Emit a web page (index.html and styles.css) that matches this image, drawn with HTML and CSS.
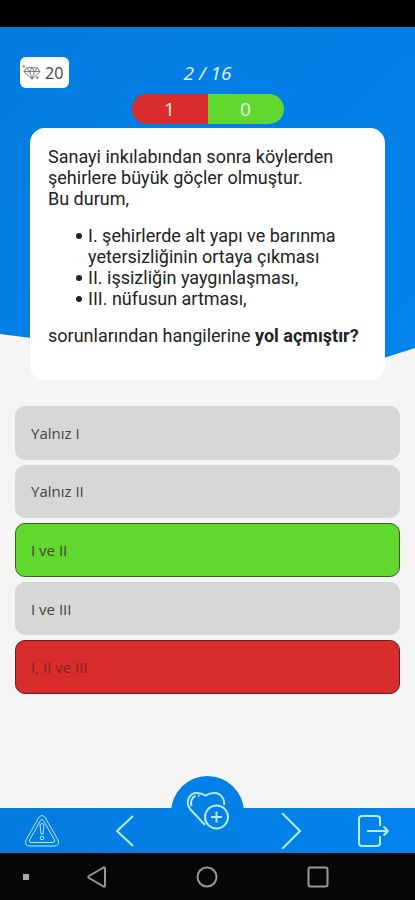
FILE: index.html
```html
<!DOCTYPE html>
<html lang="tr">
<head>
<meta charset="utf-8">
<meta name="viewport" content="width=device-width, initial-scale=1">
<title>Soru 2 / 16</title>
<link rel="stylesheet" href="styles.css">
</head>
<body>
<div class="status-bar"></div>
<main class="quiz">
  <header class="top">
    <div class="gems">
      <svg class="gem" viewBox="0 0 20 20" aria-hidden="true"><path d="M5 5h11l3 4-8.500 8L2 9zM2 9h17M5 5l3 4 2.500-4L13 9l3-4M8 9l2.500 8L13 9M2 2v3M.5 3.500h3M16 14v3M14.500 15.500h3"/></svg>
      <span>20</span>
    </div>
    <p class="progress">2 / 16</p>
  </header>
  <div class="score">
    <span class="wrong">1</span>
    <span class="right">0</span>
  </div>
  <section class="question">
    <p>Sanayi inkılabından sonra köylerden şehirlere büyük göçler olmuştur.<br>Bu durum,</p>
    <ul>
      <li>I. şehirlerde alt yapı ve barınma yetersizliğinin ortaya çıkması</li>
      <li>II. işsizliğin yaygınlaşması,</li>
      <li>III. nüfusun artması,</li>
    </ul>
    <p>sorunlarından hangilerine <b>yol açmıştır?</b></p>
  </section>
  <div class="answers">
    <button class="answer" type="button">Yalnız I</button>
    <button class="answer" type="button">Yalnız II</button>
    <button class="answer is-correct" type="button">I ve II</button>
    <button class="answer" type="button">I ve III</button>
    <button class="answer is-wrong" type="button">I, II ve III</button>
  </div>
</main>
<nav class="toolbar">
  <button class="tool" type="button" aria-label="Hata bildir">
    <svg class="warning" width="36" height="34" viewBox="0 0 36 34"><path d="M14.500 4Q18-1 21.500 4L34 26Q36 32 30 32H6Q0 32 2 26z"/><path d="M16.500 6.500Q18 4 19.500 6.500L30.500 26Q31 28.500 29 28.500H7Q5 28.500 5.500 26z"/><path d="M16 10.500Q18 8.500 20 10.500L19 20H17z"/><circle cx="18" cy="24" r="1.800"/></svg>
  </button>
  <button class="tool" type="button" aria-label="Önceki">
    <svg width="36" height="34" viewBox="0 0 36 34"><path d="M26 2L10 17l16 15"/></svg>
  </button>
  <button class="favorite" type="button" aria-label="Favorilere ekle">
    <svg width="44" height="40" viewBox="0 0 44 40"><path d="M19 34L4 18C-1 11 3 2 11 2c4 0 6 1 8.500 2.500C22 3 25 2 28 2c7 0 11 6 10 12"/><path d="M5.500 15C4 10.500 6 6.500 9.500 5M12 4.500h1.500"/><circle cx="30.500" cy="26" r="11.500"/><path d="M30.500 20.500v11M25 26h11"/></svg>
  </button>
  <button class="tool" type="button" aria-label="Sonraki">
    <svg width="36" height="36" viewBox="0 0 36 36"><path d="M9 0l18 18L9 36"/></svg>
  </button>
  <button class="tool" type="button" aria-label="Çıkış">
    <svg width="36" height="34" viewBox="0 0 36 34"><path d="M24 12V5q0-3-3-3H6Q3 2 3 5v24q0 3 3 3h15q3 0 3-3v-7M11 17h21M27.500 12.500L32 17l-4.500 4.500"/></svg>
  </button>
</nav>
<footer class="system-nav">
  <i class="dot"></i>
  <svg width="24" height="24" viewBox="0 0 24 24"><path d="M20 3.500v17q0 1.500-1.500 1L4 13q-1.500-1 0-2l14.500-8.500q1.500-.5 1.500 1z"/></svg>
  <svg width="24" height="24" viewBox="0 0 24 24"><circle cx="12" cy="12" r="9.500"/></svg>
  <svg width="24" height="24" viewBox="0 0 24 24"><rect x="2.500" y="2.500" width="19" height="19" rx="2"/></svg>
</footer>
</body>
</html>
```
FILE: styles.css
```css
* { box-sizing: border-box; }

body {
  margin: 0;
  min-height: 100vh;
  display: flex;
  flex-direction: column;
  background: #f5f5f5;
  font-family: "Open Sans", sans-serif;
  color: #444;
}

p, ul { margin: 0; }

button {
  margin: 0;
  padding: 0;
  border: 0;
  background: none;
  font: inherit;
  color: inherit;
}

svg {
  display: block;
  fill: none;
  stroke-linejoin: round;
}

.status-bar { height: 27px; background: #000; }

.quiz {
  position: relative;
  z-index: 0;
  flex: 1;
  padding-top: 30px;
}

.quiz::before {
  content: "";
  position: absolute;
  z-index: -1;
  inset: 0 0 auto;
  height: 349px;
  background: linear-gradient(135deg, #037bdf, #0284ee);
  clip-path: polygon(0 0, 100% 0, 100% 92%, 79% 100%, 0 88%);
}

.top {
  display: grid;
  grid-template-columns: 1fr auto 1fr;
  align-items: center;
  padding: 0 20px;
}

.gems {
  justify-self: start;
  display: flex;
  align-items: center;
  gap: 4px;
  height: 31px;
  padding: 0 6px 0 2px;
  border-radius: 6px;
  background: #fff;
  font-size: 16px;
}

.gem { width: 19px; height: 19px; stroke: #777; }

.progress {
  color: #e8f4ff;
  font-size: 19px;
  font-style: italic;
  font-weight: 500;
}

.score {
  display: grid;
  grid-template-columns: 1fr 1fr;
  width: 152px;
  margin: 6px auto 4px;
  border-radius: 15px;
  overflow: hidden;
  color: #f2f2e8;
  font-size: 19px;
  font-weight: 500;
  line-height: 30px;
  text-align: center;
}

.wrong { background: #d92c2c; }
.right { background: #61d82e; }

.question {
  margin: 0 30px;
  padding: 18px;
  min-height: 252px;
  border-radius: 15px;
  background: #fff;
  color: #222;
  font-family: Roboto, sans-serif;
  font-size: 18px;
  line-height: 21px;
}

.question ul {
  margin: 16px 0;
  padding-left: 40px;
  list-style: none;
}

.question li { position: relative; }

.question li::before {
  content: "";
  position: absolute;
  top: 8px;
  left: -12px;
  width: 6px;
  height: 6px;
  border-radius: 50%;
  background: #222;
}

.answers {
  display: grid;
  grid-auto-rows: 1fr;
  gap: 5px;
  min-height: 288px;
  margin: 26px 15px 0;
}

.answer {
  padding: 0 15px;
  border: 1px solid #d7d7d7;
  border-radius: 10px;
  background: #d7d7d7;
  font-size: 15px;
  text-align: left;
}

.is-correct { border-color: #33611f; background: #61d82e; }
.is-wrong { border-color: #611f1f; background: #d92c2c; color: #7d2323; }

.toolbar {
  position: relative;
  z-index: 1;
  display: grid;
  grid-template-columns: repeat(5, 1fr);
  grid-template-rows: 100%;
  align-items: center;
  height: 45px;
  background: linear-gradient(90deg, #037bdf, #0284ee);
}

.tool { display: grid; place-items: center; }

.favorite {
  align-self: end;
  justify-self: center;
  display: grid;
  justify-items: center;
  align-content: start;
  width: 73px;
  height: 77px;
  padding-top: 15px;
  border-radius: 37px 37px 0 0;
  background: #0380e6;
}

.toolbar svg { stroke: #b8ecff; stroke-width: 2; }
.toolbar .warning { stroke-width: 1; }

.system-nav {
  display: grid;
  grid-template-columns: 42px 1fr 1fr 1fr 42px;
  align-items: center;
  justify-items: center;
  height: 47px;
  background: #060606;
}

.system-nav svg { stroke: #999; stroke-width: 2; }

.dot {
  justify-self: end;
  width: 6px;
  height: 6px;
  margin-right: 13px;
  background: #aaa;
}
```
